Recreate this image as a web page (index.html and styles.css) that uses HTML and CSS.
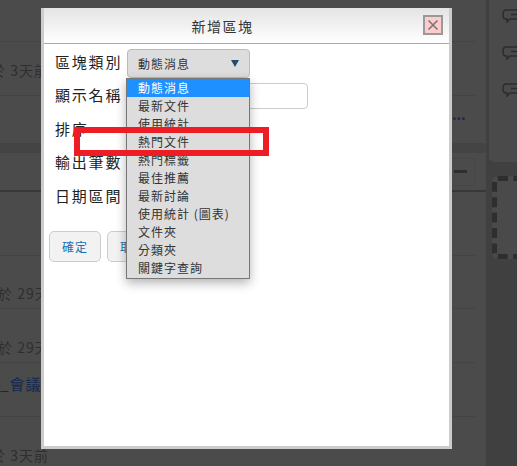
FILE: index.html
```html
<!DOCTYPE html>
<html lang="zh-Hant">
<head>
    <meta charset="UTF-8">
    <title>新增區塊</title>
    <link rel="stylesheet" href="styles.css">
</head>
<body>
    <!-- page behind the overlay -->
    <div class="page">
        <div class="main">
            <div class="row row-top"></div>
            <div class="row row-a"><span class="meta">於 3天前</span></div>
            <div class="row row-b"><span class="more">...</span></div>
            <div class="band"></div>
            <div class="panel-head">
                <div class="minus-box"><span class="minus"></span></div>
            </div>
            <div class="row row-c"></div>
            <div class="row row-d"><span class="meta meta-long">於 29天前</span></div>
            <div class="row row-e"><span class="meta meta-long">於 29天前</span></div>
            <div class="row row-f"><span class="link">_會議記錄</span></div>
            <div class="row row-g"><span class="meta">於 3天前</span></div>
        </div>
        <div class="side">
            <div class="side-card">
                <svg class="bubble" viewBox="0 0 17 14"><path d="M4 1h13v9H8l-3 3v-3H4Q1 10 1 5.500T4 1z"/><path class="dash" d="M9 5.500h8"/></svg>
                <svg class="bubble" viewBox="0 0 17 14"><path d="M4 1h13v9H8l-3 3v-3H4Q1 10 1 5.500T4 1z"/><path class="dash" d="M9 5.500h8"/></svg>
                <svg class="bubble" viewBox="0 0 17 14"><path d="M4 1h13v9H8l-3 3v-3H4Q1 10 1 5.500T4 1z"/><path class="dash" d="M9 5.500h8"/></svg>
            </div>
            <div class="dashed"></div>
        </div>
    </div>

    <div class="dialog">
        <div class="dialog-head">
            <span class="dialog-title">新增區塊</span>
            <button class="close" type="button">
                <svg viewBox="0 0 12 12"><path d="M1.500 1.500l9 9M10.500 1.500l-9 9"/></svg>
            </button>
        </div>
        <div class="dialog-body">
            <div class="field">
                <span class="label">區塊類別</span>
                <div class="select">
                    <span>動態消息</span>
                    <span class="arrow"></span>
                </div>
            </div>
            <div class="field">
                <span class="label">顯示名稱</span>
                <input class="text-input" type="text">
            </div>
            <div class="field"><span class="label">排序</span></div>
            <div class="field"><span class="label">輸出筆數</span></div>
            <div class="field"><span class="label">日期區間</span></div>
            <div class="buttons">
                <button class="btn" type="button">確定</button>
                <button class="btn" type="button">取消</button>
            </div>
        </div>
        <ul class="options">
            <li class="active">動態消息</li>
            <li>最新文件</li>
            <li>使用統計</li>
            <li>熱門文件</li>
            <li>熱門標籤</li>
            <li>最佳推薦</li>
            <li>最新討論</li>
            <li>使用統計 (圖表)</li>
            <li>文件夾</li>
            <li>分類夾</li>
            <li>關鍵字查詢</li>
        </ul>
    </div>

    <!-- red annotation box from the original screenshot -->
    <div class="mark"></div>
</body>
</html>
```

FILE: styles.css
```css
* {
    box-sizing: border-box;
    font-family: "Noto Sans CJK TC", "Noto Sans", sans-serif;
}

body {
    margin: 0;
    width: 517px;
    height: 466px;
    overflow: hidden;
    background: #404040;
    position: relative;
}

.page {
    display: flex;
    height: 466px;
}

.main {
    flex: none;
    width: 486px;
    background: #4b4b4b;
}

.side {
    flex: 1;
    background: #404040;
    overflow: hidden;
}

.row {
    width: 475px;
    border-bottom: 1px solid #444;
    white-space: nowrap;
    position: relative;
    display: flex;
    align-items: flex-end;
}

.row-top { height: 42px; }
.row-a { height: 54px; padding-bottom: 15px; }
.row-b { height: 47px; border-bottom: 0; }
.row-c { height: 64px; }
.row-d { height: 53px; }
.row-e { height: 54px; }
.row-f { height: 54px; }
.row-g { height: 51px; border-bottom: 0; padding-bottom: 3px; }

.meta {
    font-size: 14px;
    letter-spacing: 1px;
    color: #2e2e2e;
    margin-left: -9px;
}

.meta-long {
    margin-left: -2px;
    margin-bottom: 5px;
}

.link {
    font-size: 15px;
    letter-spacing: 1px;
    color: #14284e;
    margin-bottom: 22px;
}

.more {
    position: absolute;
    left: 452px;
    top: 8px;
    font-size: 14px;
    line-height: 20px;
    font-weight: 700;
    color: #1c2a50;
}

.band {
    height: 10px;
    background: #444;
}

.panel-head {
    height: 39px;
    border-bottom: 2px solid #383838;
    display: flex;
    justify-content: flex-end;
    align-items: center;
    padding-right: 11px;
}

.minus-box {
    width: 34px;
    height: 28px;
    border: 1px solid #464646;
    border-radius: 3px;
    display: flex;
    align-items: center;
    justify-content: flex-end;
    padding-right: 7px;
}

.minus {
    width: 13px;
    height: 3px;
    background: #2e2e2e;
}

.side-card {
    height: 162px;
    margin-left: 3px;
    padding: 9px 0 0 13px;
    background: #4a4a4a;
    border-bottom-left-radius: 5px;
    display: flex;
    flex-direction: column;
    gap: 23px;
}

.bubble {
    width: 17px;
    height: 14px;
    flex: none;
    fill: none;
    stroke: #2c2c2c;
    stroke-width: 1.500;
}

.dashed {
    width: 60px;
    height: 83px;
    margin: 14px 0 0 6px;
    background: #4a4a4a;
    border: 5px dashed #2e2e2e;
    border-radius: 6px;
}

.dialog {
    position: absolute;
    left: 41px;
    top: 8px;
    width: 411px;
    height: 441px;
    background: #fff;
    border: 3px solid #ccc;
    border-top: 0;
}

.dialog-head {
    height: 36px;
    padding-right: 48px;
    border-bottom: 1px solid #aaa;
    background: linear-gradient(to bottom, #e4e4e4, #fff);
    display: flex;
    align-items: center;
    justify-content: center;
    position: relative;
}

.dialog-title {
    font-size: 14px;
    letter-spacing: 1.500px;
    color: #333;
}

.close {
    position: absolute;
    right: 6px;
    top: 7px;
    width: 20px;
    height: 20px;
    padding: 2px;
    background: #fcc;
    border: 2px solid #999;
    display: flex;
}

.close svg {
    fill: none;
    stroke: #777;
    stroke-width: 1.600;
    width: 100%;
}

.dialog-body {
    padding: 2px 5px 0;
}

.field {
    display: flex;
    align-items: center;
    height: 33.500px;
    padding-left: 6px;
}

.label {
    width: 72px;
    flex: none;
    margin-bottom: 3px;
    font-size: 15px;
    letter-spacing: 1.800px;
    color: #222;
    white-space: nowrap;
}

.select {
    width: 123px;
    height: 29px;
    margin-top: 1px;
    background: #ddd;
    border: 1px solid #bbb;
    border-radius: 4px;
    padding: 0 10px;
    display: flex;
    align-items: center;
    justify-content: space-between;
    font-size: 12px;
    letter-spacing: 1px;
    color: #333;
}

.arrow {
    width: 0;
    height: 0;
    border-left: 4px solid transparent;
    border-right: 4px solid transparent;
    border-top: 7px solid #244a6e;
}

.text-input {
    width: 181px;
    height: 26px;
    border: 1px solid #ccc;
    border-radius: 4px;
    background: #fff;
}

.buttons {
    display: flex;
    gap: 6px;
    margin-top: 17px;
}

.btn {
    width: 52px;
    height: 31px;
    padding: 0;
    background: #f2f2f2;
    border: 1px solid #ccc;
    border-radius: 5px;
    font-size: 12px;
    letter-spacing: 1px;
    color: #1a6fb0;
}

.options {
    position: absolute;
    left: 82px;
    top: 70px;
    width: 124px;
    margin: 0;
    padding: 0 0 1px;
    list-style: none;
    background: #ddd;
    border: 1px solid #777;
    box-shadow: 0 4px 10px rgba(0, 0, 0, 0.3);
}

.options li {
    height: 18px;
    line-height: 18px;
    padding-left: 11px;
    font-size: 12px;
    letter-spacing: 1px;
    color: #333;
    white-space: nowrap;
}

.options .active {
    background: #1e90ff;
    color: #fff;
}

.mark {
    position: absolute;
    left: 74px;
    top: 127px;
    width: 195px;
    height: 29px;
    border: 6px solid #ee1c25;
}
```
